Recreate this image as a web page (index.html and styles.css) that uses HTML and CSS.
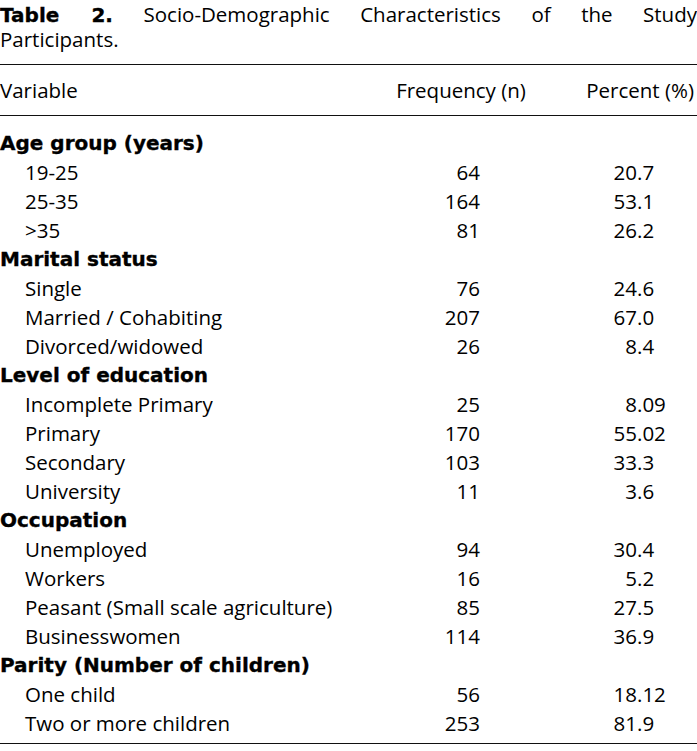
FILE: index.html
```html
<!DOCTYPE html>
<html lang="en">
<head>
<meta charset="utf-8">
<title>Table 2</title>
<link rel="stylesheet" href="styles.css">
</head>
<body>
<div class="page">
  <div class="caption">
    <div class="caption-line1"><b>Table 2.</b> Socio-Demographic Characteristics of the Study</div>
    <div class="caption-line2">Participants.</div>
  </div>
  <div class="table">
    <div class="row head">
      <div class="c-var">Variable</div>
      <div class="c-freq-h">Frequency (n)</div>
      <div class="c-pct-h">Percent (%)</div>
    </div>
    <div class="body">
      <div class="row group"><div class="c-var">Age group (years)</div></div>
      <div class="row"><div class="c-var sub">19-25</div><div class="c-freq">64</div><div class="c-pct"><span class="int">20</span><span class="frac">.7</span></div></div>
      <div class="row"><div class="c-var sub">25-35</div><div class="c-freq">164</div><div class="c-pct"><span class="int">53</span><span class="frac">.1</span></div></div>
      <div class="row"><div class="c-var sub">&gt;35</div><div class="c-freq">81</div><div class="c-pct"><span class="int">26</span><span class="frac">.2</span></div></div>

      <div class="row group"><div class="c-var">Marital status</div></div>
      <div class="row"><div class="c-var sub">Single</div><div class="c-freq">76</div><div class="c-pct"><span class="int">24</span><span class="frac">.6</span></div></div>
      <div class="row"><div class="c-var sub">Married / Cohabiting</div><div class="c-freq">207</div><div class="c-pct"><span class="int">67</span><span class="frac">.0</span></div></div>
      <div class="row"><div class="c-var sub">Divorced/widowed</div><div class="c-freq">26</div><div class="c-pct"><span class="int">8</span><span class="frac">.4</span></div></div>

      <div class="row group"><div class="c-var">Level of education</div></div>
      <div class="row"><div class="c-var sub">Incomplete Primary</div><div class="c-freq">25</div><div class="c-pct"><span class="int">8</span><span class="frac">.09</span></div></div>
      <div class="row"><div class="c-var sub">Primary</div><div class="c-freq">170</div><div class="c-pct"><span class="int">55</span><span class="frac">.02</span></div></div>
      <div class="row"><div class="c-var sub">Secondary</div><div class="c-freq">103</div><div class="c-pct"><span class="int">33</span><span class="frac">.3</span></div></div>
      <div class="row"><div class="c-var sub">University</div><div class="c-freq">11</div><div class="c-pct"><span class="int">3</span><span class="frac">.6</span></div></div>

      <div class="row group"><div class="c-var">Occupation</div></div>
      <div class="row"><div class="c-var sub">Unemployed</div><div class="c-freq">94</div><div class="c-pct"><span class="int">30</span><span class="frac">.4</span></div></div>
      <div class="row"><div class="c-var sub">Workers</div><div class="c-freq">16</div><div class="c-pct"><span class="int">5</span><span class="frac">.2</span></div></div>
      <div class="row"><div class="c-var sub">Peasant (Small scale agriculture)</div><div class="c-freq">85</div><div class="c-pct"><span class="int">27</span><span class="frac">.5</span></div></div>
      <div class="row"><div class="c-var sub">Businesswomen</div><div class="c-freq">114</div><div class="c-pct"><span class="int">36</span><span class="frac">.9</span></div></div>

      <div class="row group"><div class="c-var">Parity (Number of children)</div></div>
      <div class="row"><div class="c-var sub">One child</div><div class="c-freq">56</div><div class="c-pct"><span class="int">18</span><span class="frac">.12</span></div></div>
      <div class="row"><div class="c-var sub">Two or more children</div><div class="c-freq">253</div><div class="c-pct"><span class="int">81</span><span class="frac">.9</span></div></div>
    </div>
  </div>
</div>
</body>
</html>
```
FILE: styles.css
```css
html, body {
  margin: 0;
  padding: 0;
  background: #fff;
}
body {
  font-family: "Open Sans", "Lato", sans-serif;
  font-size: 20.5px;
  color: #000;
}
.page {
  width: 697px;
}
.caption {
  line-height: 24px;
  padding-top: 2px;
}
.caption-line1 {
  text-align: justify;
  text-align-last: justify;
}
.caption b,
.group .c-var {
  font-family: "DejaVu Sans", sans-serif;
  font-weight: 700;
  font-size: 20px;
  -webkit-text-stroke: 0.35px #000;
}
.table {
  margin-top: 13px;
  border-top: 1.5px solid #111;
  border-bottom: 1.5px solid #111;
}
.row {
  display: grid;
  grid-template-columns: 386px 150px 161px;
  height: 29px;
  align-items: center;
  white-space: nowrap;
}
.row.head {
  height: 50px;
  border-bottom: 1.5px solid #111;
}
.body {
  padding: 12px 0 6px;
}
.sub {
  padding-left: 25px;
}
.c-freq-h {
  text-align: center;
}
.c-pct-h {
  text-align: right;
  padding-right: 3px;
}
.c-freq {
  text-align: right;
  padding-right: 56px;
}
.c-pct {
  display: flex;
}
.int {
  width: 101px;
  text-align: right;
}
.frac {
  text-align: left;
}
```
